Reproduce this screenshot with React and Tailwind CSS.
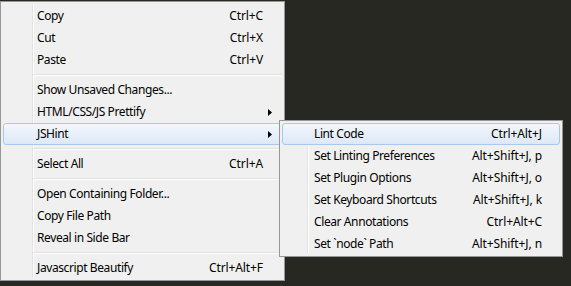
import React from "react";

const mainItems = [
  { label: "Copy", keys: "Ctrl+C" },
  { label: "Cut", keys: "Ctrl+X" },
  { label: "Paste", keys: "Ctrl+V" },
  { sep: true },
  { label: "Show Unsaved Changes..." },
  { label: "HTML/CSS/JS Prettify", sub: true },
  { label: "JSHint", sub: true, active: true },
  { sep: true },
  { label: "Select All", keys: "Ctrl+A" },
  { sep: true },
  { label: "Open Containing Folder..." },
  { label: "Copy File Path" },
  { label: "Reveal in Side Bar" },
  { sep: true },
  { label: "Javascript Beautify", keys: "Ctrl+Alt+F" },
];

const jshintItems = [
  { label: "Lint Code", keys: "Ctrl+Alt+J", active: true },
  { label: "Set Linting Preferences", keys: "Alt+Shift+J, p" },
  { label: "Set Plugin Options", keys: "Alt+Shift+J, o" },
  { label: "Set Keyboard Shortcuts", keys: "Alt+Shift+J, k" },
  { label: "Clear Annotations", keys: "Ctrl+Alt+C" },
  { label: "Set `node` Path", keys: "Alt+Shift+J, n" },
];

function Arrow() {
  return (
    <svg width="4" height="7" viewBox="0 0 4 7" className="block">
      <path d="M0 0 L4 3.5 L0 7 Z" fill="#000" />
    </svg>
  );
}

function Separator() {
  return (
    <div className="flex h-[8px] flex-col justify-center pl-[30px]">
      <div className="h-px bg-[#e0e0e0]" />
      <div className="h-px bg-white" />
    </div>
  );
}

function Row({ item, textPad, keysPad, children }) {
  return (
    <div
      className={`relative flex h-[22px] items-center rounded-[3px] border ${
        item.active
          ? "border-[#a8c8ee] bg-gradient-to-b from-[#f3f7fd] to-[#dde8f7]"
          : "border-transparent"
      }`}
    >
      <span className={`flex-1 tracking-[-0.4px] ${textPad}`}>{item.label}</span>
      {item.keys && <span className={`tracking-[-0.1px] ${keysPad}`}>{item.keys}</span>}
      {item.sub && (
        <span className="pr-[9px]">
          <Arrow />
        </span>
      )}
      {children}
    </div>
  );
}

export default function App() {
  return (
    <div
      className="relative h-[286px] w-[571px] overflow-hidden bg-[#272822] text-[12px] leading-none text-black"
      style={{ fontFamily: '"Noto Sans", "Open Sans", sans-serif' }}
    >
      {/* main context menu */}
      <div className="absolute left-0 top-px w-[285px] border border-[#979797] bg-[#f0f0f0] px-[2px] pb-px pt-[3px]">
        <div className="pointer-events-none absolute bottom-[2px] left-[31px] top-[2px] flex">
          <div className="w-px bg-[#e2e3e3]" />
          <div className="w-px bg-white" />
        </div>
        <div className="relative">
          {mainItems.map((item, i) =>
            item.sep ? (
              <Separator key={i} />
            ) : (
              <Row key={i} item={item} textPad="pl-[33px]" keysPad="pr-[18px]">
                {item.active && (
                  <div className="absolute left-[275px] top-[-4px] w-[284px] border border-[#979797] bg-[#f0f0f0] px-[2px] pb-px pt-[2px]">
                    <div className="pointer-events-none absolute bottom-[2px] left-[27px] top-[2px] flex">
                      <div className="w-px bg-[#e2e3e3]" />
                      <div className="w-px bg-white" />
                    </div>
                    <div className="relative">
                      {jshintItems.map((s, j) => (
                        <Row key={j} item={s} textPad="pl-[31px]" keysPad="pr-[17px]" />
                      ))}
                    </div>
                  </div>
                )}
              </Row>
            )
          )}
        </div>
      </div>
    </div>
  );
}
